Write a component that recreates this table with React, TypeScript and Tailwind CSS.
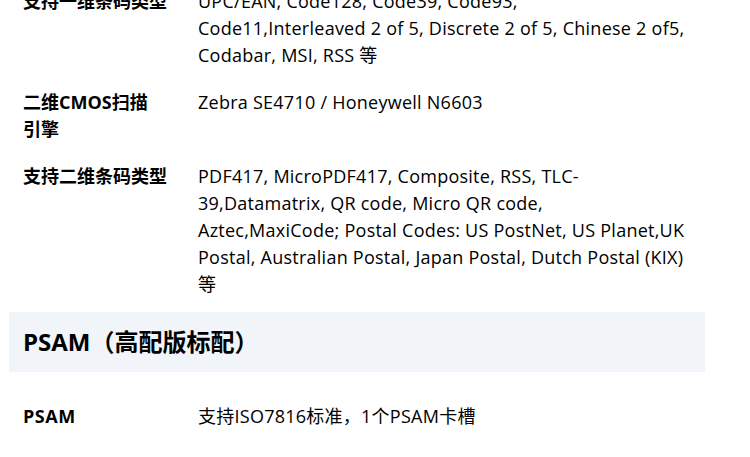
import React from "react";

const font = { fontFamily: '"Open Sans", "Noto Sans CJK SC", sans-serif' };

function Row({ label, lines }: { label: React.ReactNode; lines: React.ReactNode[] }) {
  return (
    <div className="flex py-[10px] pl-[14px]">
      <div className="w-[175px] shrink-0 pr-[25px] font-bold text-[18px] leading-[27px] text-black">{label}</div>
      <div className="flex-1 text-[18px] leading-[27px] text-black tracking-[0.25px]">
        {lines.map((l, i) => (
          <div key={i} className="whitespace-nowrap">{l}</div>
        ))}
      </div>
    </div>
  );
}

export default function App() {
  return (
    <div className="w-[750px] h-[457px] overflow-hidden bg-white" style={font}>
      <div className="mt-[-22px] ml-[9px] w-[696px]">
        <Row
          label="支持一维条码类型"
          lines={[
            "UPC/EAN, Code128, Code39, Code93,",
            "Code11,Interleaved 2 of 5, Discrete 2 of 5, Chinese 2 of5,",
            "Codabar, MSI, RSS 等",
          ]}
        />
        <Row
          label={
            <>
              二维CMOS扫描
              <br />
              引擎
            </>
          }
          lines={["Zebra SE4710 / Honeywell N6603"]}
        />
        <Row
          label="支持二维条码类型"
          lines={[
            "PDF417, MicroPDF417, Composite, RSS, TLC-",
            "39,Datamatrix, QR code, Micro QR code,",
            "Aztec,MaxiCode; Postal Codes: US PostNet, US Planet,UK",
            "Postal, Australian Postal, Japan Postal, Dutch Postal (KIX)",
            "等",
          ]}
        />
        <div className="mt-[4px] h-[60px] bg-[#f1f4f8] flex items-center pl-[14px]">
          <h2 className="text-[24px] font-bold text-black leading-none">PSAM（高配版标配）</h2>
        </div>
        <div className="mt-[21px]">
          <Row label={<span className="tracking-[0.5px]">PSAM</span>} lines={["支持ISO7816标准，1个PSAM卡槽"]} />
        </div>
      </div>
    </div>
  );
}
